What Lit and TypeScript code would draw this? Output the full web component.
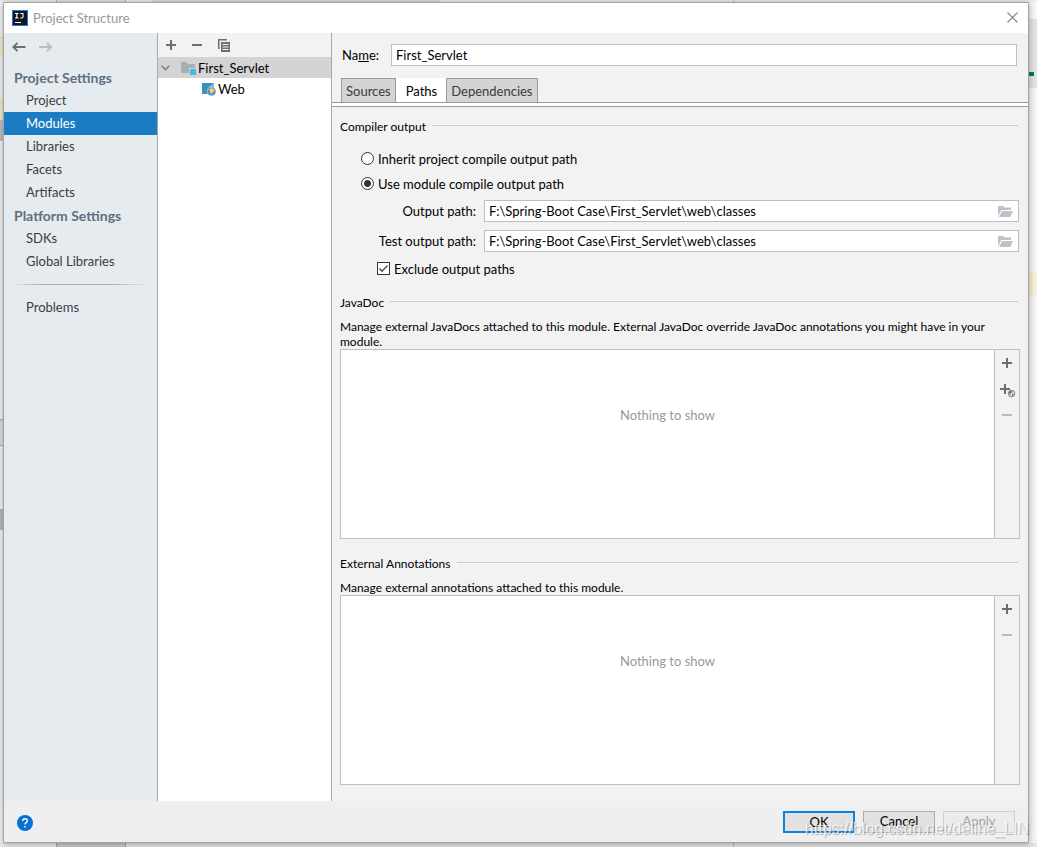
import { LitElement, html, css, svg, nothing } from "lit";
import { customElement, property, state } from "lit/decorators.js";
import { classMap } from "lit/directives/class-map.js";

const shared = css`
  :host, :host * { box-sizing: border-box; }
  button, input { font: inherit; color: inherit; margin: 0; }
  button { padding: 0; border: 0; background: none; }
  svg { display: block; flex: none; }
`;

const plus = html`<svg width="10" height="10" viewBox="0 0 10 10" aria-hidden="true"><path d="M4 0h2v4h4v2H6v4H4V6H0V4h4z" fill="currentColor"/></svg>`;
const minus = html`<svg width="10" height="10" viewBox="0 0 10 10" aria-hidden="true"><path d="M0 4h10v2H0z" fill="currentColor"/></svg>`;
const plusGlobe = html`<svg width="16" height="14" viewBox="0 0 16 14" aria-hidden="true">
  <path d="M4 0h2v4h4v2H6v4H4V6H0V4h4z" fill="currentColor"/>
  <circle cx="11.500" cy="9.500" r="3.200" fill="#e2e2e2" stroke="currentColor" stroke-width=".9"/>
  <path d="M8.800 8.300l1.700-1.500 1.800.6-.6 1.300-1.300.5.300 1.200-.9.300zM12 10l1.800-.6-.6 1.900-1.400.8z" fill="currentColor"/></svg>`;
const folder = html`<svg width="15" height="11" viewBox="0 0 15 11" aria-hidden="true">
  <path d="M0 0h5l1.500 1.500H13V4H3.500L0 10z" fill="#bcc3c8"/><path d="M4.200 5H15l-2.700 6H.9z" fill="#bcc3c8"/></svg>`;

/** Section heading followed by a rule that fills the rest of the row. */
@customElement("section-title")
export class SectionTitle extends LitElement {
  static styles = [shared, css`
    :host { display: block; }
    .row { display: flex; align-items: center; gap: 6px; padding-right: 2px; }
    .title { margin: 0; font-size: 12px; line-height: 16px; font-weight: 400; }
    .rule { flex: 1; height: 1px; background: #cbcbcb; margin-bottom: 3px; }
  `];
  @property() label = "";
  render() {
    return html`<div class="row"><h2 class="title">${this.label}</h2><span class="rule"></span></div>`;
  }
}

/** Empty list with a vertical tool strip on its right. */
@customElement("path-list")
export class PathList extends LitElement {
  static styles = [shared, css`
    :host { display: flex; min-height: 120px; border: 1px solid #bfbfbf; background: #fff; }
    .empty { flex: 1; display: flex; justify-content: center; padding-top: 55px; color: #999; line-height: 20px; }
    .tools { flex: none; width: 25px; display: flex; flex-direction: column; border-left: 1px solid #bfbfbf; background: #f2f2f2; color: #6e6e6e; }
    .tool { display: flex; align-items: center; padding-left: 7px; height: 26px; }
    .wide { padding-left: 5px; padding-top: 4px; }
    .tool:disabled { color: #b9b9b9; }
  `];
  @property() label = "";
  @property({ type: Boolean }) url = false;
  render() {
    return html`
      <div class="empty" role="list" aria-label=${this.label}>Nothing to show</div>
      <div class="tools">
        <button class="tool" aria-label="Add">${plus}</button>
        ${this.url ? html`<button class="tool wide" aria-label="Add from URL">${plusGlobe}</button>` : nothing}
        <button class="tool" aria-label="Remove" disabled>${minus}</button>
      </div>`;
  }
}

@customElement("app-root")
export class AppRoot extends LitElement {
  static styles = [shared, css`
    :host {
      position: relative; display: flex; min-height: 100vh; padding: 2px 8px 4px 3px;
      font: 13px/20px Lato, "Noto Sans", sans-serif; color: #000;
      background-color: #f7f7f7;
      background-repeat: no-repeat;
      background-image:
        linear-gradient(#067d5a, #067d5a), linear-gradient(#e4e4e4, #e4e4e4), linear-gradient(#f8f1d5, #f8f1d5),
        linear-gradient(#f3efcd, #f3efcd), linear-gradient(#f3efcd, #f3efcd), linear-gradient(#c2c2c2, #c2c2c2),
        linear-gradient(#a6a6a6, #e2e2e2 2px, #e2e2e2 26px, #b5b5b5 26px), linear-gradient(#bdbdbd, #bdbdbd),
        linear-gradient(90deg, #ececec 56px, #b0b0b0 56px, #b0b0b0 57px, #e2e2e2 57px, #e2e2e2 125px, #b0b0b0 125px, #b0b0b0 126px, #ececec 126px, #ececec 152px, #dcdcdc 152px, #dcdcdc 440px, #ededed 440px, #ededed 733px, #c8c8c8 733px, #c8c8c8 734px, #ededed 734px),
        linear-gradient(90deg, #ececec 56px, #a8a8a8 56px, #a8a8a8 57px, #cdcdcd 57px, #cdcdcd 125px, #a8a8a8 125px, #a8a8a8 126px, #e6e6e6 126px, #e6e6e6 733px, #b8b8b8 733px, #b8b8b8 734px, #e6e6e6 734px);
      background-size: 5px 4px, 9px 69px, 9px 23px, 3px 21px, 3px 21px, 3px 21px, 3px 27px, 3px 21px, 100% 2px, 100% 4px;
      background-position: 1029px 72px, 100% 19px, 100% 272px, 0 36px, 0 99px, 0 120px, 0 419px, 0 509px, 0 0, 0 100%;
    }
    .dialog { flex: 1; min-width: 0; display: flex; flex-direction: column; border: 1px solid #a3a3a3; background: #f2f2f2; box-shadow: 0 1px 7px rgba(0, 0, 0, .35); }
    .titlebar { display: flex; align-items: center; gap: 5px; height: 30px; padding: 0 10px 1px 8px; background: #fff; color: #999; }
    .caption { flex: 1; margin: 0; font-size: 13px; font-weight: 400; }
    .body { flex: 1; min-height: 0; display: flex; }

    .sidebar { flex: none; width: 154px; border-right: 1px solid #a9a9a9; background: #e6ebef; color: #3c3c3c; }
    .history { display: flex; align-items: center; gap: 13px; height: 28px; padding-left: 8px; margin-bottom: 5px; }
    .group { margin: 0; padding-left: 10px; font-size: 14px; line-height: 23px; font-weight: 700; color: #5f6f80; }
    .links { margin: 0; padding: 0; list-style: none; }
    .link { display: block; padding-left: 22px; line-height: 23px; color: inherit; text-decoration: none; }
    .current { background: #1a7dc4; color: #fff; }
    .divider { height: 1px; margin: 11px 8px; background: linear-gradient(90deg, transparent, #b0b0b0 20%, #b0b0b0 75%, transparent); }

    .tree { flex: none; width: 174px; border-right: 1px solid #a9a9a9; background: #fff; }
    .treetools { display: flex; align-items: center; gap: 16px; height: 24px; padding-left: 8px; background: #f2f2f2; color: #6e6e6e; }
    .node { display: flex; align-items: center; height: 21px; }
    .module { gap: 2px; padding-left: 3px; background: #d4d4d4; }
    .chevron { margin-right: 9px; }
    .facet { gap: 2px; padding-left: 44px; }

    .editor { flex: 1; min-width: 0; display: flex; flex-direction: column; }
    .namerow { display: flex; align-items: center; gap: 12px; padding: 11px 11px 0 10px; }
    .field { flex: 1; min-width: 0; display: flex; align-items: center; height: 22px; border: 1px solid #bdbdbd; background: #fff; }
    .text { flex: 1; min-width: 0; height: 20px; padding: 0 4px; border: 0; outline: 0; background: transparent; }
    .browse { padding-right: 5px; }
    .tabs { display: flex; padding: 12px 0 0 9px; }
    .tab { z-index: 2; height: 24px; padding: 1px 4px 0; border: 1px solid #9b9b9b; border-bottom: 0; background: #d4d4d4; color: #3c3c3c; }
    .chosen { z-index: 1; margin: 0 -1px; padding: 1px 9px 0 10px; border-color: #fff; background: #fff; color: #000; }
    .rail { height: 5px; border: solid #999; border-width: 1px 0; background: #fff; }
    .page { flex: 1; display: flex; flex-direction: column; padding: 12px 8px 16px 8px; }
    .options { display: flex; flex-direction: column; padding: 11px 1px 15px 21px; }
    .choice { display: flex; align-items: center; gap: 4px; height: 25px; }
    .mark { appearance: none; flex: none; width: 13px; height: 13px; border: 1px solid #333; background: #fff; }
    .radio { border-radius: 50%; }
    .radio:checked { background: radial-gradient(circle, #333 3px, #fff 4px); }
    .check:checked { background: #fff url('data:image/svg+xml,<svg xmlns="http://www.w3.org/2000/svg" viewBox="0 0 11 11"><path d="M1.500 5.500l2.500 2.700L9.500 2.500" fill="none" stroke="%23444" stroke-width="1.300"/></svg>'); }
    .paths { display: grid; grid-template-columns: auto 1fr; column-gap: 8px; row-gap: 8px; align-items: center; padding: 4px 0 5px 15px; }
    .pathlabel { text-align: right; min-width: 100px; }
    .exclude { padding-left: 16px; height: 23px; }
    .note { margin: 8px 0 0; padding-right: 20px; font-size: 12px; line-height: 15px; }
    .list { flex: 1; }
    .second { margin-top: 17px; }

    .footer { display: flex; align-items: center; gap: 8px; height: 41px; padding: 0 13px; background: #efefef; }
    .help { margin-right: auto; margin-top: 2px; }
    .action { width: 72px; height: 22px; padding-bottom: 2px; border: 1px solid #adadad; background: #e1e1e1; line-height: 18px; }
    .default { border: 2px solid #0a84e0; }
    .action:disabled { border-color: #cfcfcf; background: #ebebeb; color: #a6a6a6; }
    .stamp { position: absolute; right: 8px; bottom: 8px; font: 16px/20px "Liberation Sans", sans-serif; color: rgba(255, 255, 255, .75); text-shadow: 1px 1px 1px rgba(0, 0, 0, .28); pointer-events: none; }
  `];

  @state() private section = "Modules";
  @state() private tab = "Paths";

  private links(names: string[]) {
    return html`<ul class="links">${names.map(n => html`<li>
      <a class=${classMap({ link: true, current: n === this.section })} href="#" @click=${(e: Event) => { e.preventDefault(); this.section = n; }}>${n}</a></li>`)}</ul>`;
  }

  private arrow(flip: boolean) {
    return html`<svg width="14" height="10" viewBox="0 0 14 10" aria-hidden="true">
      ${svg`<path d=${flip ? "M0 5H12M8 .8L12.200 5L8 9.200" : "M13.500 5H2M5.500 .8L1.300 5L5.500 9.200"} fill="none" stroke=${flip ? "#b9bdc0" : "#6e6e6e"} stroke-width="1.900"/>`}
    </svg>`;
  }

  private pathField(id: string, label: string) {
    return html`<label class="pathlabel" for=${id}>${label}</label>
      <div class="field"><input class="text" id=${id} value="F:\\Spring-Boot Case\\First_Servlet\\web\\classes">
      <button class="browse" aria-label="Browse">${folder}</button></div>`;
  }

  render() {
    return html`
      <div class="dialog" role="dialog" aria-labelledby="caption">
        <header class="titlebar">
          <svg width="16" height="16" viewBox="0 0 16 16" aria-hidden="true">
            <rect x=".5" y=".5" width="15" height="15" fill="#161616" stroke="#1976e8"/>
            <path d="M3 3.500h3.600M4.800 3.500v4.500M3 8h3.600M8.300 3.500h2.700v3.300q0 1.200-1.200 1.200H8.300M3 12.500h6" fill="none" stroke="#fff" stroke-width="1.100"/>
          </svg>
          <h1 class="caption" id="caption">Project Structure</h1>
          <button aria-label="Close"><svg width="11" height="11" viewBox="0 0 11 11"><path d="M.5 .5l10 10M10.500 .5l-10 10" stroke="#888" stroke-width="1.100"/></svg></button>
        </header>
        <div class="body">
          <nav class="sidebar" aria-label="Settings">
            <div class="history">
              <button aria-label="Back">${this.arrow(false)}</button>
              <button aria-label="Forward" disabled>${this.arrow(true)}</button>
            </div>
            <h2 class="group">Project Settings</h2>
            ${this.links(["Project", "Modules", "Libraries", "Facets", "Artifacts"])}
            <h2 class="group">Platform Settings</h2>
            ${this.links(["SDKs", "Global Libraries"])}
            <div class="divider"></div>
            ${this.links(["Problems"])}
          </nav>
          <section class="tree" aria-label="Modules">
            <div class="treetools">
              <button aria-label="Add">${plus}</button>
              <button aria-label="Remove">${minus}</button>
              <button aria-label="Copy"><svg width="12" height="13" viewBox="0 0 12 13"><path d="M0 0h9v1.500H1.500V10H0z" fill="#6e6e6e"/><path fill-rule="evenodd" d="M3 3h9v10H3zM4.500 5h6v1h-6zM4.500 7.500h6v1h-6zM4.500 10h6v1h-6z" fill="#6e6e6e"/></svg></button>
            </div>
            <div role="tree" aria-label="Project modules">
              <div class="node module" role="treeitem" aria-expanded="true" aria-selected="true">
                <svg class="chevron" width="9" height="6" viewBox="0 0 9 6"><path d="M.7 .8l3.800 3.800L8.300 .8" fill="none" stroke="#808080" stroke-width="1.500"/></svg>
                <svg width="15" height="14" viewBox="0 0 15 14"><path d="M0 1h5.500l1.500 2h7v9H0z" fill="#a7b0b7"/><path d="M8 7h7v7H8z" fill="#d4d4d4"/><path d="M9 8h6v6H9z" fill="#49b6e4"/></svg>
                <span>First_Servlet</span>
              </div>
              <div class="node facet" role="treeitem">
                <svg width="14" height="14" viewBox="0 0 14 14"><path d="M0 1h12v11H0z" fill="#3f8fbd"/><path d="M6 5.500L12 1v3.500z" fill="#8dbfda"/><circle cx="9.500" cy="9.500" r="4.500" fill="#cfe3f0"/><circle cx="9.500" cy="9.500" r="4" fill="#4f8fc4"/><path d="M6.800 7.500l2.900-1.600 2.800 1.700-.6 2-1.500.8-1 2-1.200-2.400z" fill="#f8cf5a"/></svg>
                <span>Web</span>
              </div>
            </div>
          </section>
          <main class="editor">
            <div class="namerow">
              <label for="name">Na<u>m</u>e:</label>
              <div class="field"><input class="text" id="name" value="First_Servlet"></div>
            </div>
            <div class="tabs" role="tablist">
              ${["Sources", "Paths", "Dependencies"].map(t => html`<button role="tab" aria-selected=${t === this.tab} class=${classMap({ tab: true, chosen: t === this.tab })} @click=${() => { this.tab = t; }}>${t}</button>`)}
            </div>
            <div class="rail"></div>
            <div class="page" role="tabpanel">
              <section-title label="Compiler output"></section-title>
              <div class="options">
                <label class="choice"><input class="mark radio" type="radio" name="out">Inherit project compile output path</label>
                <label class="choice"><input class="mark radio" type="radio" name="out" checked>Use module compile output path</label>
                <div class="paths">
                  ${this.pathField("output", "Output path:")}
                  ${this.pathField("test", "Test output path:")}
                </div>
                <label class="choice exclude"><input class="mark check" type="checkbox" checked>Exclude output paths</label>
              </div>
              <section-title label="JavaDoc"></section-title>
              <p class="note">Manage external JavaDocs attached to this module. External JavaDoc override JavaDoc annotations you might have in your module.</p>
              <path-list class="list" label="JavaDoc paths" url></path-list>
              <section-title class="second" label="External Annotations"></section-title>
              <p class="note">Manage external annotations attached to this module.</p>
              <path-list class="list" label="Annotation paths"></path-list>
            </div>
          </main>
        </div>
        <footer class="footer">
          <button class="help" aria-label="Help"><svg width="16" height="16" viewBox="0 0 16 16"><circle cx="8" cy="8" r="8" fill="#0a70d2"/><path d="M5.700 6q0-2.300 2.300-2.300T10.300 5.800Q10.300 7 8.900 7.800 8 8.400 8 9.600M8 11v1.600" fill="none" stroke="#fff" stroke-width="1.400"/></svg></button>
          <button class="action default">OK</button>
          <button class="action">Cancel</button>
          <button class="action" disabled>Apply</button>
        </footer>
      </div>
      <div class="stamp">https://blog.csdn.net/deline_LIN</div>`;
  }
}
